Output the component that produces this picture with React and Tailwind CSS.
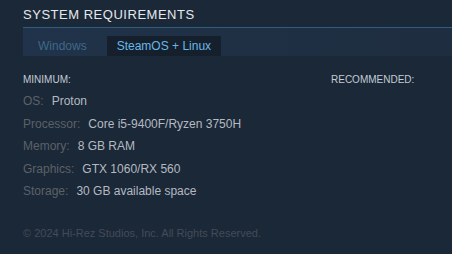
const rows = [
  { label: "OS:", value: "Proton" },
  { label: "Processor:", value: "Core i5-9400F/Ryzen 3750H" },
  { label: "Memory:", value: "8 GB RAM" },
  { label: "Graphics:", value: "GTX 1060/RX 560" },
  { label: "Storage:", value: "30 GB available space" },
]

export default function App() {
  return (
    <div
      className="w-[452px] h-[254px] overflow-hidden bg-[#1b2838] pl-[23px]"
      style={{ fontFamily: '"Liberation Sans", Arial, sans-serif' }}
    >
      {/* Heading */}
      <h2 className="pt-[6px] h-[27px] text-[13px] leading-[18px] tracking-[0.04em] text-[#e6e9ec] uppercase">
        System Requirements
      </h2>
      <div className="h-px bg-[#2f5d7d]" />

      {/* Platform tabs */}
      <div className="h-[28px] flex items-end gap-[10px] pl-[5px] bg-gradient-to-r from-[#20334a] to-[#1e2d3f]">
        <div className="h-[20px] px-[10px] text-[12px] leading-[20px] text-[#3f6887]">
          Windows
        </div>
        <div className="h-[20px] px-[10px] text-[12px] leading-[20px] text-[#66b8e8] bg-[#16202d]">
          SteamOS + Linux
        </div>
      </div>

      {/* Requirements */}
      <div className="flex pt-[17px]">
        <div className="w-[308px]">
          <div className="text-[10px] leading-[14px] text-[#c2ccd4] uppercase mb-[3px]">
            Minimum:
          </div>
          {rows.map((r) => (
            <div key={r.label} className="text-[12px] leading-[22.5px] whitespace-nowrap">
              <span className="text-[#5c6167] mr-[8px]">{r.label}</span>
              <span className="text-[#b4bac0]">{r.value}</span>
            </div>
          ))}
        </div>
        <div className="text-[10px] leading-[14px] text-[#c2ccd4] uppercase">
          Recommended:
        </div>
      </div>

      <p className="mt-[23px] text-[11px] leading-[14px] text-[#434b57]">
        © 2024 Hi-Rez Studios, Inc. All Rights Reserved.
      </p>
    </div>
  )
}
